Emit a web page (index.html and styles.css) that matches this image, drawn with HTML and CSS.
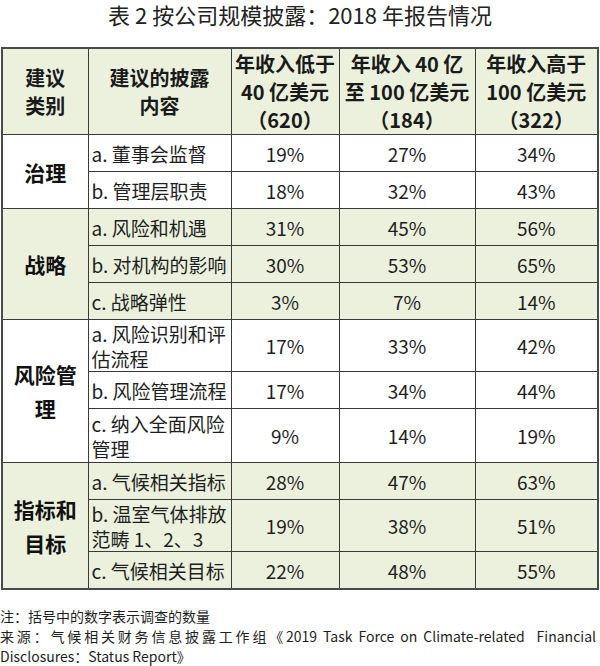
FILE: index.html
```html
<!DOCTYPE html>
<html lang="zh-CN">
<head>
<meta charset="utf-8">
<title>表 2 按公司规模披露</title>
<link rel="stylesheet" href="styles.css">
</head>
<body>
<div class="page">
  <h1 class="title">表 2 按公司规模披露：2018 年报告情况</h1>
  <table class="report">
    <colgroup>
      <col class="c1"><col class="c2"><col class="c3"><col class="c4"><col class="c5">
    </colgroup>
    <thead>
      <tr class="head">
        <th>建议<br>类别</th>
        <th>建议的披露<br>内容</th>
        <th>年收入低于<br>40 亿美元<br>（620）</th>
        <th>年收入 40 亿<br>至 100 亿美元<br>（184）</th>
        <th>年收入高于<br>100 亿美元<br>（322）</th>
      </tr>
    </thead>
    <tbody>
      <tr class="r1">
        <td class="grp" rowspan="2">治理</td>
        <td class="item">a. 董事会监督</td><td class="num">19%</td><td class="num">27%</td><td class="num">34%</td>
      </tr>
      <tr class="r1">
        <td class="item">b. 管理层职责</td><td class="num">18%</td><td class="num">32%</td><td class="num">43%</td>
      </tr>
      <tr class="r1 tint">
        <td class="grp" rowspan="3">战略</td>
        <td class="item">a. 风险和机遇</td><td class="num">31%</td><td class="num">45%</td><td class="num">56%</td>
      </tr>
      <tr class="r1 tint">
        <td class="item">b. 对机构的影响</td><td class="num">30%</td><td class="num">53%</td><td class="num">65%</td>
      </tr>
      <tr class="r1 tint">
        <td class="item">c. 战略弹性</td><td class="num">3%</td><td class="num">7%</td><td class="num">14%</td>
      </tr>
      <tr class="r2">
        <td class="grp" rowspan="3">风险管<br>理</td>
        <td class="item">a. 风险识别和评<br>估流程</td><td class="num">17%</td><td class="num">33%</td><td class="num">42%</td>
      </tr>
      <tr class="r1">
        <td class="item">b. 风险管理流程</td><td class="num">17%</td><td class="num">34%</td><td class="num">44%</td>
      </tr>
      <tr class="r2b">
        <td class="item">c. 纳入全面风险<br>管理</td><td class="num">9%</td><td class="num">14%</td><td class="num">19%</td>
      </tr>
      <tr class="r1 tint">
        <td class="grp" rowspan="3">指标和<br>目标</td>
        <td class="item">a. 气候相关指标</td><td class="num">28%</td><td class="num">47%</td><td class="num">63%</td>
      </tr>
      <tr class="r2 tint">
        <td class="item">b. 温室气体排放<br>范畴 1、2、3</td><td class="num">19%</td><td class="num">38%</td><td class="num">51%</td>
      </tr>
      <tr class="r1 tint">
        <td class="item">c. 气候相关目标</td><td class="num">22%</td><td class="num">48%</td><td class="num">55%</td>
      </tr>
    </tbody>
  </table>
  <div class="notes">
    <p class="note">注：括号中的数字表示调查的数量</p>
    <p class="source">来源：气候相关财务信息披露工作组《2019 Task Force on Climate-related&nbsp; Financial Disclosures：Status Report》</p>
  </div>
</div>
</body>
</html>
```
FILE: styles.css
```css
html, body {
  margin: 0;
  padding: 0;
  background: #ffffff;
}

body {
  font-family: "Noto Sans CJK SC", "Noto Sans", sans-serif;
  color: #1e1e1e;
}

.page {
  width: 600px;
  height: 666px;
  overflow: hidden;
}

.title {
  margin: 0;
  height: 47px;
  padding-top: 0;
  box-sizing: border-box;
  font-size: 22px;
  font-weight: normal;
  line-height: 29px;
  text-align: center;
  color: #222;
}

.report {
  margin-left: 1px;
  width: 596px;
  border-collapse: collapse;
  table-layout: fixed;
  border: 2px solid #4a4a4a;
  font-size: 19px;
}

.c1 { width: 86px; }
.c2 { width: 143px; }
.c3 { width: 108px; }
.c4 { width: 136px; }
.c5 { width: 123px; }

.report th,
.report td {
  border: 1px solid #3a3a3a;
  padding: 0;
  vertical-align: middle;
}

.head th {
  height: 85px;
  background: #ebf1dd;
  font-weight: bold;
  font-size: 20px;
  line-height: 28px;
  text-align: center;
  color: #1a1a1a;
}

.r1 td { height: 36px; }
.r2 td { height: 51px; }
.r2b td { height: 53px; }

.tint td { background: #ebf1dd; }

.grp {
  font-weight: bold;
  font-size: 21px;
  line-height: 34px;
  text-align: center;
  color: #111;
}

.item {
  padding-left: 3px !important;
  line-height: 25px;
  white-space: nowrap;
  text-align: left;
}

.num {
  text-align: center;
  line-height: 25px;
}

.notes {
  margin-top: 16px;
  width: 596px;
  font-size: 14px;
  line-height: 20px;
  color: #1e1e1e;
}

.notes p {
  margin: 0;
}

.source {
  text-align: justify;
}
```
